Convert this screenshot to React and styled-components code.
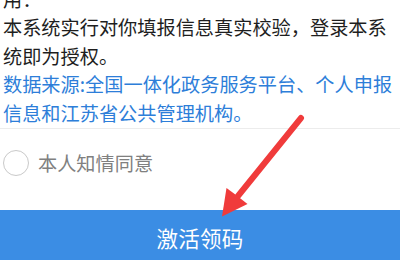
import styled, { createGlobalStyle } from "styled-components";

const GlobalStyle = createGlobalStyle`
  html, body {
    margin: 0;
    height: 260px;
    overflow: hidden;
    background: #fff;
  }
  body {
    font-family: "Noto Sans CJK SC", "Noto Sans", sans-serif;
  }
`;

const Page = styled.div`
  position: relative;
  height: 265px;
  display: flex;
  flex-direction: column;
`;

const Notice = styled.section`
  margin-top: -15px;
  padding: 0 0 1px 3px;
  border-bottom: 1px solid #ececec;
`;

const Para = styled.p`
  margin: 0;
  font-size: 19.2px;
  line-height: 28.4px;
  color: ${(p) => (p.$blue ? "#2d7ed9" : "#1e1e1e")};
`;

const ConsentRow = styled.label`
  display: flex;
  align-items: center;
  gap: 9px;
  padding: 20px 3px 0;
`;

const Radio = styled.span`
  width: 26px;
  height: 26px;
  box-sizing: border-box;
  border: 1px solid #c9c9c9;
  border-radius: 50%;
  flex-shrink: 0;
`;

const ConsentText = styled.span`
  font-size: 19.2px;
  color: #808080;
`;

const Spacer = styled.div`
  flex: 1;
`;

const ActivateButton = styled.button`
  height: 55px;
  border: none;
  background: #3b8de4;
  color: #fff;
  font-family: inherit;
  font-size: 21.5px;
  letter-spacing: 0.3px;
`;

const Arrow = styled.svg`
  position: absolute;
  top: 0;
  left: 0;
  pointer-events: none;
`;

export default function App() {
  return (
    <>
      <GlobalStyle />
      <Page>
        <Notice>
          <Para>用：</Para>
          <Para>本系统实行对你填报信息真实校验，登录本系统即为授权。</Para>
          <Para $blue>数据来源:全国一体化政务服务平台、个人申报信息和江苏省公共管理机构。</Para>
        </Notice>
        <ConsentRow>
          <Radio />
          <ConsentText>本人知情同意</ConsentText>
        </ConsentRow>
        <Spacer />
        <ActivateButton>激活领码</ActivateButton>

        <Arrow width="400" height="260" viewBox="0 0 400 260">
          <line x1="301" y1="118" x2="238" y2="196" stroke="#f03b3b" strokeWidth="6" strokeLinecap="round" />
          <polygon points="222,216.5 226.5,188 236,195 247.5,204" fill="#f03b3b" />
        </Arrow>
      </Page>
    </>
  );
}
